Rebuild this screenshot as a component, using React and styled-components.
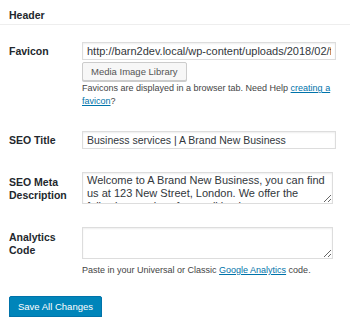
import React from 'react';
import styled, { createGlobalStyle } from 'styled-components';

const GlobalStyle = createGlobalStyle`
  html, body {
    margin: 0;
    padding: 0;
    background: #ffffff;
  }
  body {
    font-family: 'Liberation Sans', Arial, sans-serif;
    color: #444;
  }
  * {
    box-sizing: border-box;
  }
`;

/* Section title with the thin rule under it */
const SectionHeader = styled.h2`
  margin: 0;
  height: 25px;
  padding: 5px 0 0 9px;
  display: flex;
  align-items: center;
  font-size: 10.5px;
  font-weight: 700;
  color: #23282d;
  border-bottom: 1px solid #eeeeee;
`;

const Form = styled.form`
  padding: 5px 14px 0 9px;
`;

const Row = styled.div`
  display: grid;
  grid-template-columns: 73px 1fr;
  padding: 12px 0 11px;
`;

const Label = styled.label`
  padding-top: ${(props) => props.offset || 3}px;
  font-size: 10.5px;
  line-height: 13px;
  font-weight: 700;
  color: #23282d;
`;

const Field = styled.div`
  display: flex;
  flex-direction: column;
  align-items: flex-start;
  min-width: 0;
`;

const TextInput = styled.input`
  width: 100%;
  height: 18px;
  margin: 0;
  padding: 0 4px;
  font-family: inherit;
  font-size: ${(props) => props.size || 10.5}px;
  color: #32373c;
  background: #fff;
  border: 1px solid #dddddd;
  box-shadow: inset 0 1px 2px rgba(0, 0, 0, 0.07);
  outline: none;
`;

const TextArea = styled.textarea`
  width: 251px;
  height: 32px;
  margin: 0;
  padding: 1px 4px;
  font-family: inherit;
  font-size: 11px;
  line-height: 13px;
  color: #32373c;
  background: #fff;
  border: 1px solid #dddddd;
  box-shadow: inset 0 1px 2px rgba(0, 0, 0, 0.07);
  overflow: hidden;
  resize: vertical;
  outline: none;
`;

const SecondaryButton = styled.button`
  margin-top: 2px;
  height: 19px;
  padding: 0 8px;
  font-family: inherit;
  font-size: 9.5px;
  color: #555;
  background: #f7f7f7;
  border: 1px solid #cccccc;
  border-radius: 2px;
  box-shadow: 0 1px 0 #cccccc;
`;

const Description = styled.p`
  margin: ${(props) => props.gap || 1}px 0 0;
  font-size: 9px;
  line-height: 13px;
  color: #444;

  a {
    color: #0073aa;
    text-decoration: underline;
  }
`;

const Submit = styled.div`
  padding: 8px 0 0 9px;
`;

const PrimaryButton = styled.button`
  height: 21px;
  width: 93px;
  padding: 0;
  font-family: inherit;
  font-size: 9.5px;
  color: #fff;
  background: #0085ba;
  border: 1px solid #0073aa;
  border-radius: 2px;
  box-shadow: 0 1px 0 #006799;
`;

const App = () => {
  return (
    <>
      <GlobalStyle />
      <SectionHeader>Header</SectionHeader>
      <Form onSubmit={(e) => e.preventDefault()}>
        <Row>
          <Label offset={3}>Favicon</Label>
          <Field>
            <TextInput
              readOnly
              size={11}
              value="http://barn2dev.local/wp-content/uploads/2018/02/favicon.png"
            />
            <SecondaryButton type="button">Media Image Library</SecondaryButton>
            <Description>
              Favicons are displayed in a browser tab. Need Help <a href="#">creating a</a>{' '}
              <a href="#">favicon</a>?
            </Description>
          </Field>
        </Row>

        <Row>
          <Label offset={3}>SEO Title</Label>
          <Field>
            <TextInput readOnly value="Business services | A Brand New Business" />
          </Field>
        </Row>

        <Row>
          <Label offset={4}>SEO Meta Description</Label>
          <Field>
            <TextArea
              readOnly
              value="Welcome to A Brand New Business, you can find us at 123 New Street, London. We offer the following services for small businesses."
            />
          </Field>
        </Row>

        <Row>
          <Label offset={4}>Analytics Code</Label>
          <Field>
            <TextArea readOnly value="" />
            <Description gap={5}>
              Paste in your Universal or Classic <a href="#">Google Analytics</a> code.
            </Description>
          </Field>
        </Row>
      </Form>
      <Submit>
        <PrimaryButton type="button">Save All Changes</PrimaryButton>
      </Submit>
    </>
  );
};

export default App;
